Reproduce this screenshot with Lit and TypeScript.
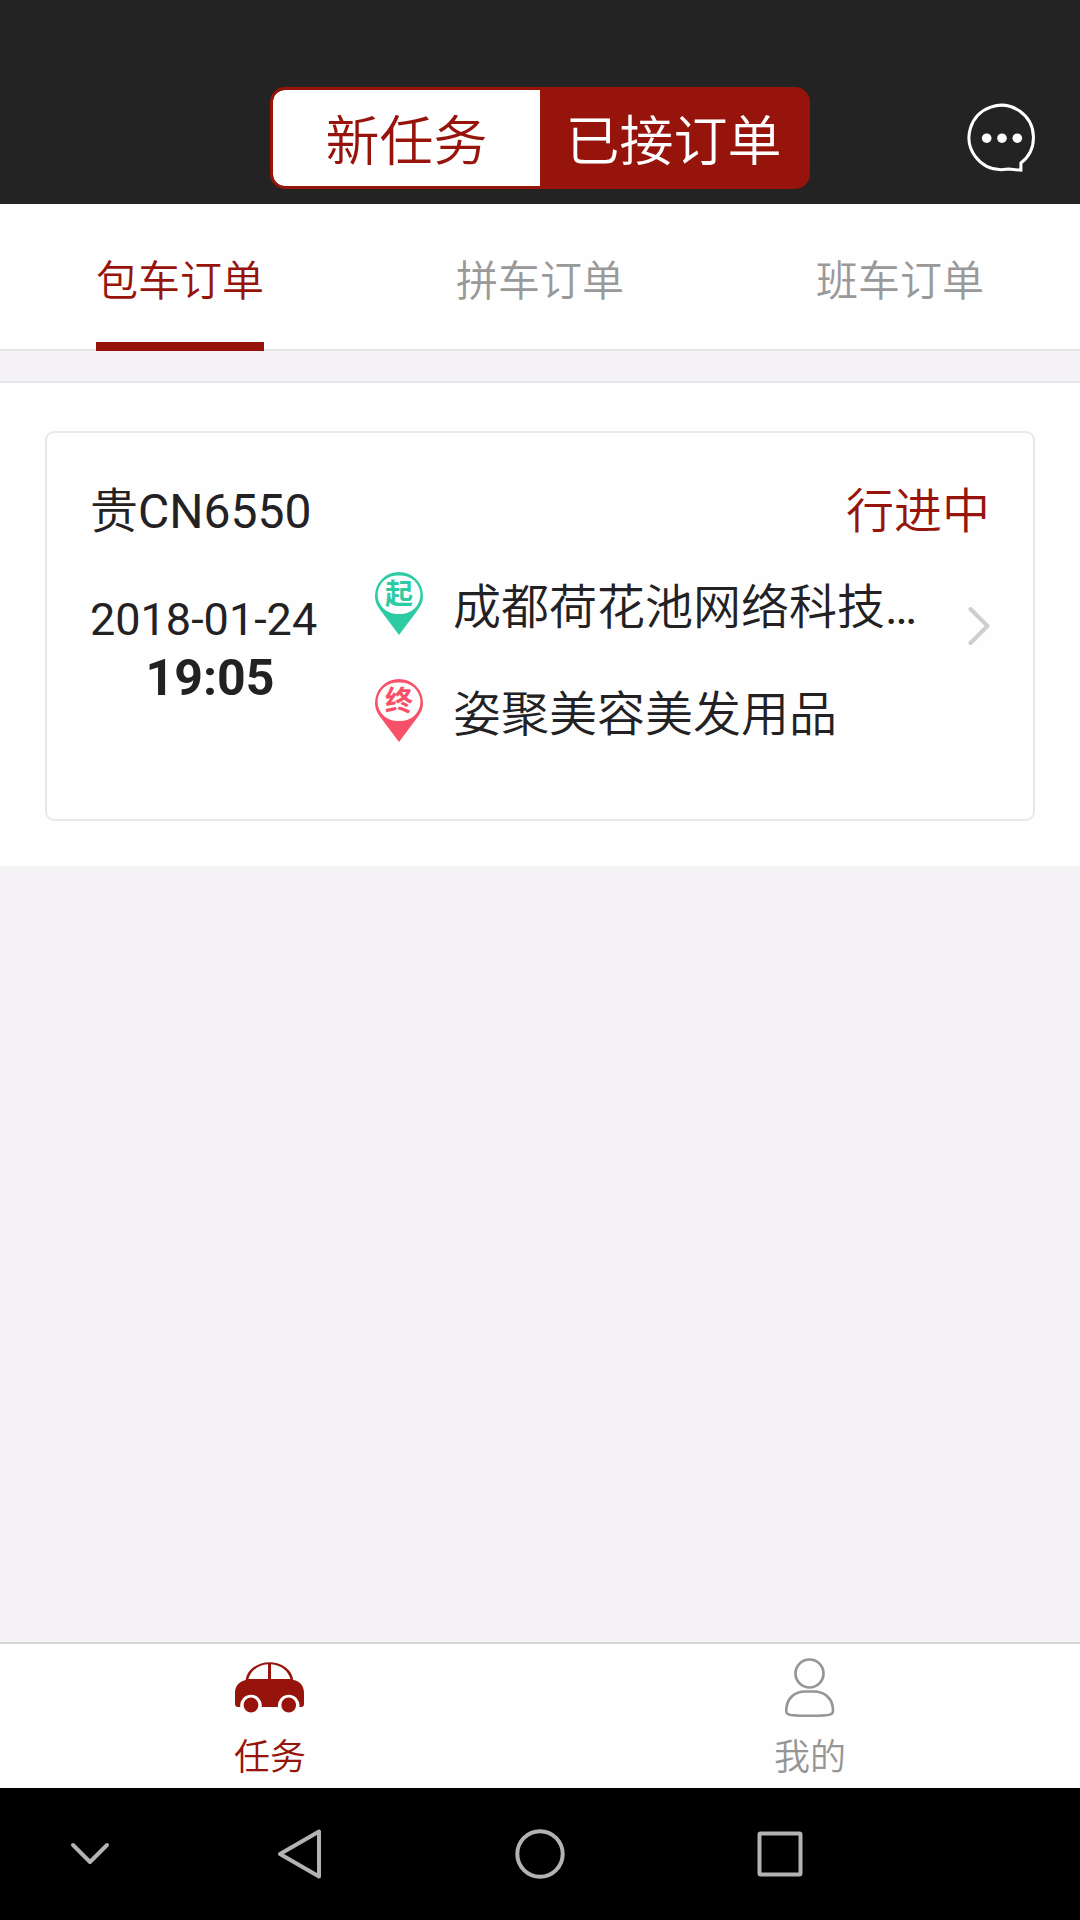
import { LitElement, html, css, svg, TemplateResult } from "lit";
import { customElement, property, state } from "lit/decorators.js";
import { classMap } from "lit/directives/class-map.js";

interface Stop {
  kind: "start" | "end";
  mark: string;
  name: string;
}

interface Order {
  plate: string;
  status: string;
  date: string;
  time: string;
  stops: Stop[];
}

const ORDERS: Order[] = [
  {
    plate: "贵CN6550",
    status: "行进中",
    date: "2018-01-24",
    time: "19:05",
    stops: [
      { kind: "start", mark: "起", name: "成都荷花池网络科技…" },
      { kind: "end", mark: "终", name: "姿聚美容美发用品" },
    ],
  },
];

const MODES = ["新任务", "已接订单"];
const TABS = ["包车订单", "拼车订单", "班车订单"];

const carIcon = svg`
  <svg class="icon" width="70" height="60" viewBox="0 0 70 60" aria-hidden="true">
    <path fill="currentColor" fill-rule="evenodd" d="M10.600 23 A24 20 0 0 1 58.300 23 C65 24 69 29 69 36 V47 Q69 50 66 50 H64.400 A10.800 10.800 0 1 0 43 50 H26.700 A10.800 10.800 0 1 0 5.300 50 H3 Q0 50 0 47 V36 C0 29 4 24.500 10.600 23 Z M13.300 22 H33 V7.300 C23 8 16 13.500 13.300 22 Z M36 7.300 V22 H55.500 C53 13.500 46 8 36 7.300 Z"/>
    <circle cx="16" cy="48" r="7.400" fill="currentColor"/>
    <circle cx="53.700" cy="48" r="7.400" fill="currentColor"/>
  </svg>`;

const personIcon = svg`
  <svg class="icon" width="50" height="60" viewBox="0 0 50 60" fill="none" stroke="currentColor" stroke-width="2.700" aria-hidden="true">
    <circle cx="24.500" cy="16.500" r="14"/>
    <path d="M20.500 34.500 H28.500 C41 34.500 48 43 48 53 C48 56.500 47 57.500 43 58 C32 59 17 59 6 58 C2 57.500 1 56.500 1.300 53 C1.500 43 8 34.500 20.500 34.500 Z"/>
  </svg>`;

@customElement("order-card")
export class OrderCard extends LitElement {
  @property({ attribute: false }) order!: Order;

  static styles = css`
    :host {
      display: block;
    }
    .card {
      display: block;
      padding: 49px 43px 69px;
      border: 2px solid #e9e8ea;
      border-radius: 9px;
      background: #fefefe;
      color: #232123;
      text-decoration: none;
      box-sizing: border-box;
    }
    .head {
      display: flex;
      justify-content: space-between;
      margin-bottom: 30px;
      font-size: 48px;
      line-height: 60px;
    }
    .status {
      color: #96140c;
    }
    .body {
      display: grid;
      grid-template-columns: 240px minmax(0, 1fr) 24px;
      column-gap: 45px;
    }
    .when {
      display: flex;
      flex-direction: column;
      padding-top: 18px;
    }
    .date {
      font-size: 45px;
      line-height: 60px;
    }
    .time {
      font-size: 50px;
      line-height: 56px;
      font-weight: 700;
      text-align: center;
    }
    .stops {
      display: flex;
      flex-direction: column;
      gap: 36px;
      margin: 0;
      padding: 0;
      list-style: none;
    }
    .stop {
      display: flex;
      gap: 30px;
      font-size: 48px;
      line-height: 71px;
      white-space: nowrap;
    }
    .pin {
      flex: none;
      font-family: "Noto Sans CJK SC", sans-serif;
      font-size: 28px;
      font-weight: 700;
    }
    .pin.start {
      color: #2dcba4;
    }
    .pin.end {
      color: #f85068;
    }
    .more {
      padding-top: 34px;
      color: #cfcdd0;
    }
  `;

  private pin(stop: Stop): TemplateResult {
    return html`<svg class=${classMap({ pin: true, [stop.kind]: true })} width="48" height="63" viewBox="0 0 48 63">
      <path fill="currentColor" fill-rule="evenodd" d="M24 0 A24 24 0 0 1 48 24 C48 30 45.500 34.500 42 39 L24 63 L6 39 C2.500 34.500 0 30 0 24 A24 24 0 0 1 24 0 Z M24 3.500 A20 19.300 0 1 0 24 42 A20 19.300 0 1 0 24 3.500 Z"/>
      <text x="24" y="32" text-anchor="middle" fill="currentColor">${stop.mark}</text>
    </svg>`;
  }

  render() {
    const o = this.order;
    return html`<a class="card" href="#order">
      <div class="head">
        <span>${o.plate}</span>
        <span class="status">${o.status}</span>
      </div>
      <div class="body">
        <div class="when">
          <span class="date">${o.date}</span>
          <span class="time">${o.time}</span>
        </div>
        <ul class="stops">
          ${o.stops.map((s) => html`<li class="stop">${this.pin(s)}<span>${s.name}</span></li>`)}
        </ul>
        <svg class="more" width="24" height="40" viewBox="0 0 24 40" fill="none" stroke="currentColor" stroke-width="4" stroke-linecap="round" stroke-linejoin="round" aria-hidden="true">
          <path d="M4.500 3 L21.500 20 L4.500 37"/>
        </svg>
      </div>
    </a>`;
  }
}

@customElement("app-root")
export class AppRoot extends LitElement {
  @state() private mode = 0;
  @state() private tab = 0;

  static styles = css`
    :host {
      display: flex;
      flex-direction: column;
      min-height: 100vh;
      background: #f5f3f6;
      font-family: Roboto, "Noto Sans CJK SC DemiLight", "Noto Sans CJK SC", sans-serif;
    }
    button {
      margin: 0;
      padding: 0;
      border: 0;
      background: none;
      font: inherit;
      color: inherit;
      cursor: pointer;
    }
    svg {
      display: block;
    }
    .top {
      display: grid;
      grid-template-columns: 1fr 2fr 1fr;
      align-items: center;
      padding: 87px 0 15px;
      background: #232323;
    }
    .modes {
      grid-column: 2;
      display: grid;
      grid-template-columns: 1fr 1fr;
      border: 3px solid #96140c;
      border-radius: 15px;
      overflow: hidden;
      background: #96140c;
    }
    .mode {
      padding-top: 10px;
      font-size: 54px;
      line-height: 86px;
      color: #fff;
    }
    .mode.on {
      background: #fff;
      color: #96140c;
      border-radius: 12px 0 0 12px;
    }
    .chat {
      justify-self: end;
      margin-right: 43px;
      color: #fff;
    }
    .tabs {
      display: grid;
      grid-template-columns: repeat(3, 1fr);
      justify-items: center;
      background: #fefefe;
      border-bottom: 2px solid #e6e5e7;
    }
    .tab {
      margin-bottom: -2px;
      padding-top: 18px;
      border-bottom: 9px solid transparent;
      font-size: 42px;
      line-height: 120px;
      color: #999;
    }
    .tab.on {
      color: #96140c;
      border-color: #96140c;
    }
    .list {
      margin-top: 30px;
      padding: 48px 45px 45px;
      border-top: 2px solid #e6e5e7;
      background: #fefefe;
    }
    .bar {
      display: grid;
      grid-template-columns: 1fr 1fr;
      margin-top: auto;
      border-top: 2px solid #d4d3d5;
      background: #fefefe;
    }
    .item {
      display: flex;
      flex-direction: column;
      align-items: center;
      gap: 17px;
      padding: 13px 0 5px;
      font-size: 36px;
      line-height: 49px;
      color: #969696;
      text-decoration: none;
    }
    .item.on {
      color: #96140c;
    }
    .system {
      display: grid;
      grid-template-columns: 3fr 4fr 4fr 4fr 3fr;
      justify-items: center;
      background: #000;
      color: #b5b2b6;
    }
    .key {
      padding: 40px 0;
    }
  `;

  private key(label: string, shape: TemplateResult) {
    return html`<button class="key" aria-label=${label}>
      <svg width="52" height="52" viewBox="0 0 52 52" fill="none" stroke="currentColor" stroke-width="4" stroke-linecap="round" stroke-linejoin="round">${shape}</svg>
    </button>`;
  }

  render() {
    return html`
      <header class="top">
        <div class="modes">
          ${MODES.map(
            (m, i) => html`<button class=${classMap({ mode: true, on: i === this.mode })} @click=${() => (this.mode = i)}>${m}</button>`
          )}
        </div>
        <button class="chat" aria-label="消息">
          <svg width="70" height="70" viewBox="0 0 70 70" fill="none" stroke="currentColor" stroke-width="3">
            <path d="M53.900 60 A32.200 32.200 0 1 0 34.500 66.700 C37.500 66.700 39.500 66 42 66 L53.900 67.200 Z"/>
            <g fill="currentColor" stroke="none">
              <circle cx="19.700" cy="35.200" r="4.800"/>
              <circle cx="35" cy="35.200" r="4.800"/>
              <circle cx="50.300" cy="35.200" r="4.800"/>
            </g>
          </svg>
        </button>
      </header>
      <nav class="tabs">
        ${TABS.map(
          (t, i) => html`<button class=${classMap({ tab: true, on: i === this.tab })} @click=${() => (this.tab = i)}>${t}</button>`
        )}
      </nav>
      <main class="list">
        ${ORDERS.map((o) => html`<order-card .order=${o}></order-card>`)}
      </main>
      <nav class="bar">
        <a class="item on" href="#tasks">${carIcon}<span>任务</span></a>
        <a class="item" href="#me">${personIcon}<span>我的</span></a>
      </nav>
      <footer class="system">
        ${this.key("收起", svg`<path d="M9 17 L26 34 L43 17"/>` as TemplateResult)}
        ${this.key("返回", svg`<path d="M45 3.500 V48.500 L6 26 Z"/>` as TemplateResult)}
        ${this.key("主页", svg`<circle cx="26" cy="26" r="22.700"/>` as TemplateResult)}
        ${this.key("最近任务", svg`<rect x="5.500" y="5.500" width="41" height="41" rx="1"/>` as TemplateResult)}
      </footer>
    `;
  }
}
